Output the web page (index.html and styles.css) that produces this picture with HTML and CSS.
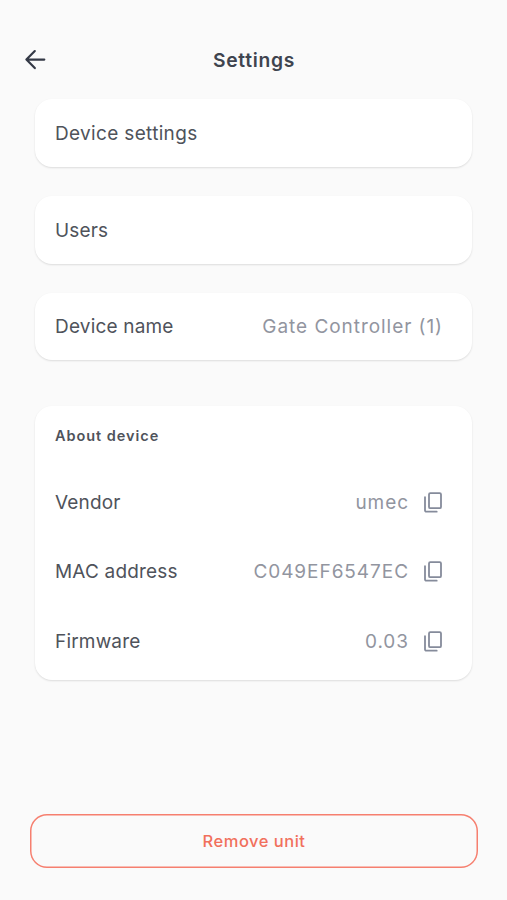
FILE: index.html
```html
<!DOCTYPE html>
<html lang="en">
<head>
	<meta charset="UTF-8">
	<title>Settings</title>
	<link rel="stylesheet" href="styles.css">
</head>
<body>
	<svg class="sprite" width="0" height="0">
		<symbol id="copy" viewBox="0 0 20 22">
			<rect x="6" y="1.2" width="12" height="15" rx="1.3"/>
			<path d="M2 5.2v13.2a1.3 1.3 0 0 0 1.3 1.3h10.4"/>
		</symbol>
	</svg>
	<div class="screen">
		<header class="header">
			<svg class="back" width="24" height="24" viewBox="0 0 24 24">
				<path d="M21.3 11.6H3.5M11.8 3.1L3.4 11.6l8.4 8.5"/>
			</svg>
			<h1 class="title">Settings</h1>
		</header>
		<main class="content">
			<div class="card row"><span class="label label-wide">Device settings</span></div>
			<div class="card row"><span class="label">Users</span></div>
			<div class="card row">
				<span class="label">Device name</span>
				<span class="value">Gate Controller (1)</span>
			</div>
			<section class="card about">
				<h2 class="about-title">About device</h2>
				<div class="item">
					<span class="label">Vendor</span>
					<span class="value">umec</span>
					<svg class="copy"><use href="#copy"/></svg>
				</div>
				<div class="item">
					<span class="label">MAC address</span>
					<span class="value">C049EF6547EC</span>
					<svg class="copy"><use href="#copy"/></svg>
				</div>
				<div class="item">
					<span class="label">Firmware</span>
					<span class="value">0.03</span>
					<svg class="copy"><use href="#copy"/></svg>
				</div>
			</section>
		</main>
		<button class="remove">Remove unit</button>
	</div>
</body>
</html>
```
FILE: styles.css
```css
* {
	box-sizing: border-box;
}
body {
	margin: 0;
	background: #fafafa;
	font-family: Inter, "Liberation Sans", sans-serif;
	color: #4f535b;
}
.sprite {
	display: block;
}
.screen {
	display: flex;
	flex-direction: column;
	height: 900px;
	padding: 40px 29px 32px 30px;
}
.header {
	display: grid;
	grid-template-columns: 24px 1fr 24px;
	align-items: center;
	height: 40px;
	margin: 0 -7px;
}
.back {
	fill: none;
	stroke: #343946;
	stroke-width: 2.2;
	stroke-linecap: round;
	stroke-linejoin: round;
}
.title {
	margin: 0;
	font-size: 19.3px;
	font-weight: 600;
	letter-spacing: 0.7px;
	text-align: center;
	color: #3f444f;
}
.content {
	display: flex;
	flex-direction: column;
	gap: 29px;
	margin: 19px 6px 0 5px;
}
.card {
	padding: 0 29px 0 20px;
	background: #fff;
	border-radius: 17px;
	box-shadow: 0 1px 2px rgba(0, 0, 0, 0.12);
}
.row {
	display: flex;
	align-items: center;
	justify-content: space-between;
	height: 67.8px;
	padding-top: 2px;
}
.label {
	font-size: 19px;
	line-height: 24px;
	letter-spacing: 0.18px;
}
.label-wide {
	letter-spacing: 0.33px;
}
.value {
	font-size: 19px;
	line-height: 24px;
	letter-spacing: 0.95px;
	color: #92959f;
}
.about {
	height: 274px;
	margin-top: 17px;
	padding-top: 20px;
}
.about-title {
	margin: 0 0 22.5px;
	font-size: 14.5px;
	font-weight: 600;
	line-height: 19px;
	letter-spacing: 0.95px;
}
.item {
	display: flex;
	align-items: center;
	height: 69.6px;
}
.item .value {
	margin-left: auto;
}
.copy {
	width: 20px;
	height: 22px;
	margin-left: 14px;
	fill: none;
	stroke: #858b9b;
	stroke-width: 1.8;
	stroke-linecap: round;
}
.remove {
	height: 54px;
	margin-top: auto;
	border: 0;
	border-radius: 17px;
	box-shadow: inset 0 0 0 1.5px #f67f6f;
	background: none;
	font-family: inherit;
	font-size: 16.5px;
	font-weight: 500;
	letter-spacing: 0.5px;
	color: #f1705c;
}
```
